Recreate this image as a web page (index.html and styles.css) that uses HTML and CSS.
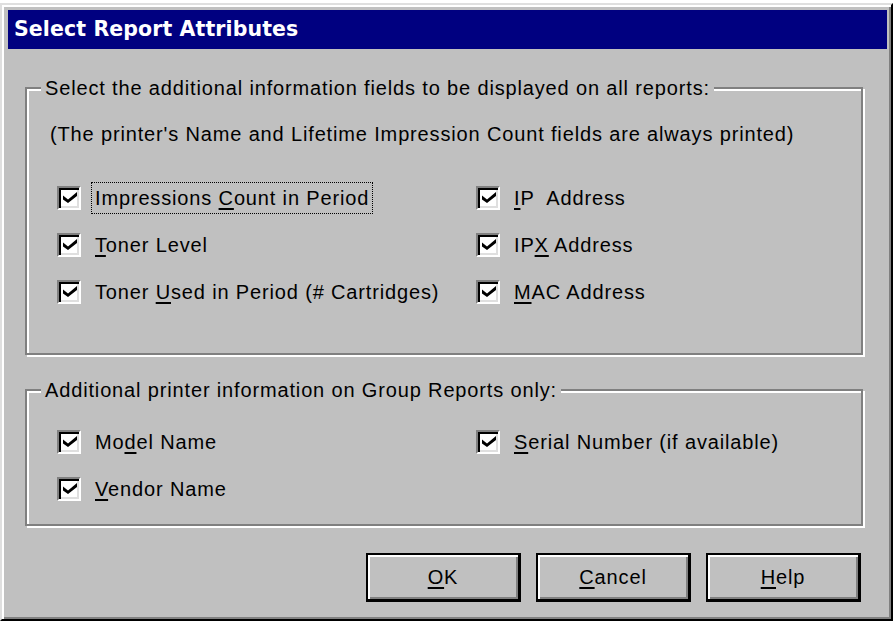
FILE: index.html
```html
<!DOCTYPE html>
<html lang="en">
<head>
<meta charset="utf-8">
<title>Select Report Attributes</title>
<link rel="stylesheet" href="styles.css">
</head>
<body>
<div class="dialog">
  <div class="titlebar">Select Report Attributes</div>
  <div class="content">
    <section class="group group-fields">
      <div class="group-title">Select the additional information fields to be displayed on all reports:</div>
      <p class="note">(The printer's Name and Lifetime Impression Count fields are always printed)</p>
      <div class="checks">
        <label class="check"><span class="box"><svg viewBox="0 0 14 11" class="tick"><polygon points="0,3.5 5,7.5 14,0 14,4 5,11 0,7.5"/></svg></span><span class="text focus">Impressions <u>C</u>ount in Period</span></label>
        <label class="check"><span class="box"><svg viewBox="0 0 14 11" class="tick"><polygon points="0,3.5 5,7.5 14,0 14,4 5,11 0,7.5"/></svg></span><span class="text"><u>I</u>P&nbsp; Address</span></label>
        <label class="check"><span class="box"><svg viewBox="0 0 14 11" class="tick"><polygon points="0,3.5 5,7.5 14,0 14,4 5,11 0,7.5"/></svg></span><span class="text"><u>T</u>oner Level</span></label>
        <label class="check"><span class="box"><svg viewBox="0 0 14 11" class="tick"><polygon points="0,3.5 5,7.5 14,0 14,4 5,11 0,7.5"/></svg></span><span class="text">IP<u>X</u> Address</span></label>
        <label class="check"><span class="box"><svg viewBox="0 0 14 11" class="tick"><polygon points="0,3.5 5,7.5 14,0 14,4 5,11 0,7.5"/></svg></span><span class="text">Toner <u>U</u>sed in Period (# Cartridges)</span></label>
        <label class="check"><span class="box"><svg viewBox="0 0 14 11" class="tick"><polygon points="0,3.5 5,7.5 14,0 14,4 5,11 0,7.5"/></svg></span><span class="text"><u>M</u>AC Address</span></label>
      </div>
    </section>
    <section class="group group-extra">
      <div class="group-title">Additional printer information on Group Reports only:</div>
      <div class="checks">
        <label class="check"><span class="box"><svg viewBox="0 0 14 11" class="tick"><polygon points="0,3.5 5,7.5 14,0 14,4 5,11 0,7.5"/></svg></span><span class="text">Mo<u>d</u>el Name</span></label>
        <label class="check"><span class="box"><svg viewBox="0 0 14 11" class="tick"><polygon points="0,3.5 5,7.5 14,0 14,4 5,11 0,7.5"/></svg></span><span class="text"><u>S</u>erial Number (if available)</span></label>
        <label class="check"><span class="box"><svg viewBox="0 0 14 11" class="tick"><polygon points="0,3.5 5,7.5 14,0 14,4 5,11 0,7.5"/></svg></span><span class="text"><u>V</u>endor Name</span></label>
      </div>
    </section>
    <div class="buttons">
      <button class="btn" type="button"><u>O</u>K</button>
      <button class="btn" type="button"><u>C</u>ancel</button>
      <button class="btn" type="button"><u>H</u>elp</button>
    </div>
  </div>
</div>
</body>
</html>
```

FILE: styles.css
```css
body {
  margin: 0;
  background: #fff;
  font-family: "Liberation Sans", Arial, sans-serif;
  font-size: 20px;
  letter-spacing: 0.85px;
  color: #000;
}

.dialog {
  width: 893px;
  height: 618px;
  margin-top: 3px;
  box-sizing: border-box;
  background: #c0c0c0;
  border: 2px solid;
  border-color: #dfdfdf #000 #000 #dfdfdf;
  box-shadow: inset 2px 2px #fff, inset -2px -2px #808080;
  padding: 5px 4px 0 6px;
}

.titlebar {
  height: 39px;
  line-height: 39px;
  background: #000080;
  color: #fff;
  font-family: "DejaVu Sans", Verdana, sans-serif;
  font-weight: bold;
  font-size: 20.5px;
  letter-spacing: 0.1px;
  padding-left: 6px;
}

.content {
  padding: 38px 24px 0 17px;
}

.group {
  border: 2px solid #808080;
  box-shadow: inset 2px 2px #fff, 2px 2px #fff;
}

.group-fields {
  padding-bottom: 38px;
}

.group-extra {
  margin-top: 34px;
  padding-bottom: 12px;
}

.group-title {
  display: table;
  margin: -12px 0 0 14px;
  padding: 0 4px;
  line-height: 22px;
  background: #c0c0c0;
}

.note {
  margin: 24px 0 0 23px;
  line-height: 22px;
}

.checks {
  display: grid;
  grid-template-columns: 419px 1fr;
  grid-auto-rows: 47px;
  margin: 29px 0 0 30px;
}

.group-extra .checks {
  margin-top: 17px;
}

.check {
  display: flex;
  align-items: center;
  gap: 10px;
}

.box {
  width: 24px;
  height: 24px;
  box-sizing: border-box;
  border: 2px solid;
  border-color: #808080 #fff #fff #808080;
  box-shadow: inset 2px 2px #000, inset -2px -2px #dfdfdf;
  background: #fff;
  display: flex;
  align-items: center;
  justify-content: center;
  flex: none;
}

.tick {
  width: 14px;
  height: 11px;
  margin-left: 1px;
  fill: #000;
}

.text {
  padding: 4px 3px;
  border: 1px dotted transparent;
  line-height: 22px;
  white-space: nowrap;
}

.text.focus {
  border-color: #000;
}

u {
  text-decoration-thickness: 2px;
  text-underline-offset: 3px;
}

.buttons {
  display: flex;
  justify-content: flex-end;
  gap: 15px;
  margin-top: 27px;
  padding-right: 2px;
}

.btn {
  width: 155px;
  height: 49px;
  box-sizing: border-box;
  background: #c0c0c0;
  border: 2px solid #000;
  border-right-width: 3px;
  border-bottom-width: 3px;
  box-shadow: inset 2px 2px #fff, inset -2px -2px #808080;
  font-family: "Liberation Sans", Arial, sans-serif;
  font-size: 20px;
  letter-spacing: 0.85px;
  color: #000;
  padding: 0;
}
```
